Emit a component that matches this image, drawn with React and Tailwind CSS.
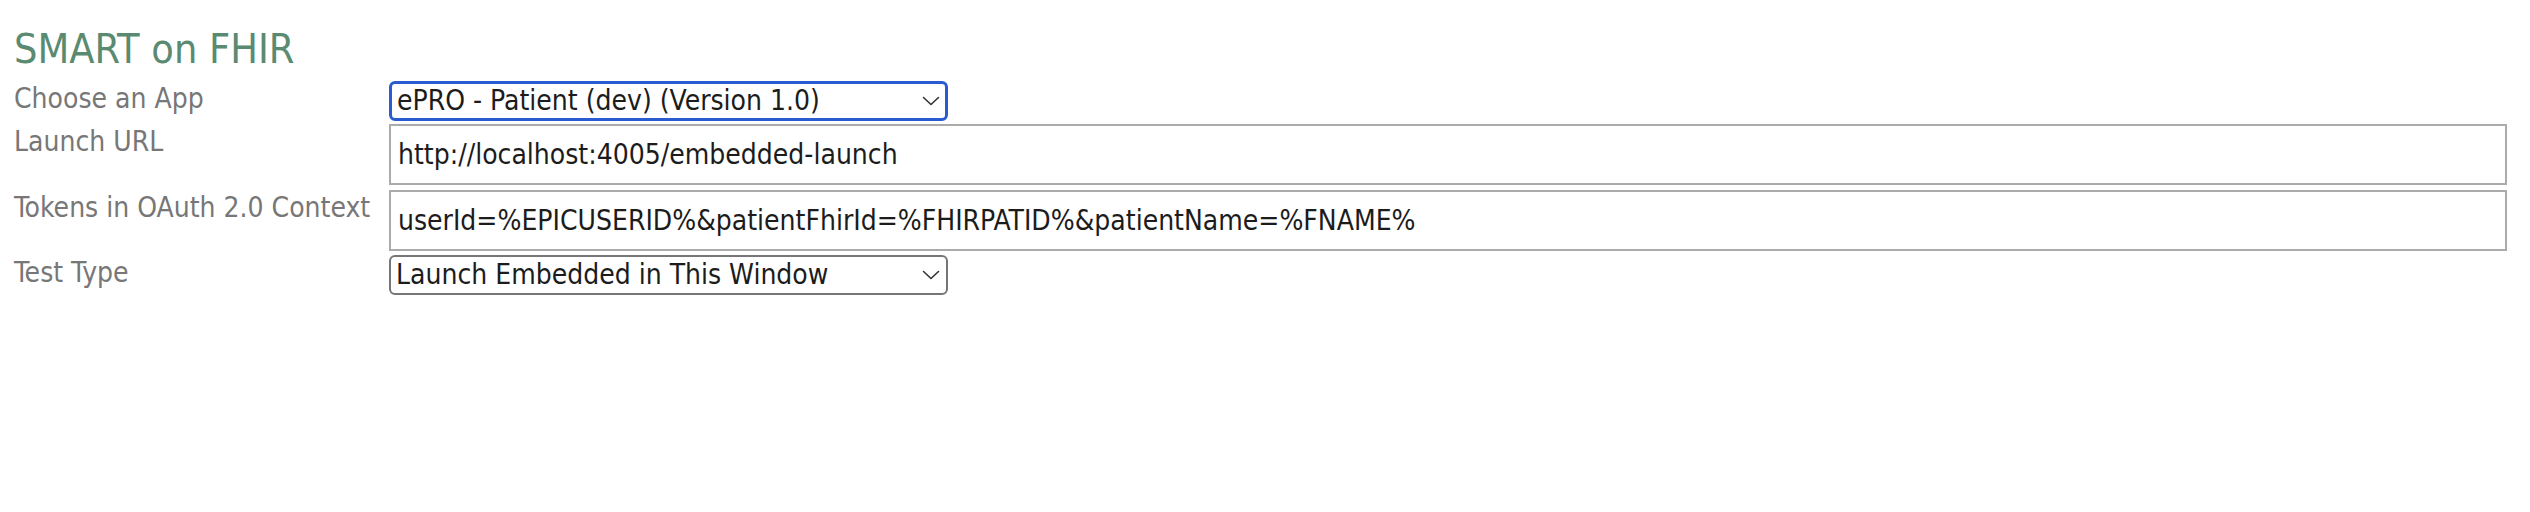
import { useState } from 'react'

const font = { fontFamily: '"DejaVu Sans Condensed", "DejaVu Sans", sans-serif' }

function Chevron() {
  return (
    <svg width="18" height="10" viewBox="0 0 18 10" fill="none" className="pointer-events-none absolute right-[8px] top-1/2 -translate-y-1/2">
      <path d="M1.5 1.5 L9 8.5 L16.5 1.5" stroke="#333" strokeWidth="1.6" strokeLinecap="round" strokeLinejoin="round" />
    </svg>
  )
}

function Select({ value, options, focused, onChange }) {
  return (
    <div className="relative w-[559px]">
      <select
        value={value}
        onChange={(e) => onChange(e.target.value)}
        className={`h-[40px] w-full appearance-none rounded-[6px] bg-white pl-[5px] pr-10 text-[28px] leading-[34px] text-[#1c1c1c] outline-none ${
          focused ? 'border-[3px] border-[#2b5bd0]' : 'border-2 border-[#767676]'
        }`}
      >
        {options.map((o) => (
          <option key={o}>{o}</option>
        ))}
      </select>
      <Chevron />
    </div>
  )
}

function Row({ label, children, className = '' }) {
  return (
    <div className={`flex items-start ${className}`}>
      <div className="w-[375px] shrink-0 text-[28px] leading-[36px] text-[#777]">{label}</div>
      <div className="flex-1">{children}</div>
    </div>
  )
}

export default function App() {
  const [app, setApp] = useState('ePRO - Patient (dev) (Version 1.0)')
  const [url, setUrl] = useState('http://localhost:4005/embedded-launch')
  const [tokens, setTokens] = useState('userId=%EPICUSERID%&patientFhirId=%FHIRPATID%&patientName=%FNAME%')
  const [testType, setTestType] = useState('Launch Embedded in This Window')

  return (
    <div className="min-h-[512px] bg-white pl-[14px] pr-[23px] pt-[25px]" style={font}>
      <h1 className="text-[41px] leading-[48px] font-normal text-[#5a8b72]">SMART on FHIR</h1>

      <div className="mt-[8px] flex flex-col">
        <Row label="Choose an App">
          <Select
            value={app}
            onChange={setApp}
            focused
            options={['ePRO - Patient (dev) (Version 1.0)', 'ePRO - Provider (dev) (Version 1.0)']}
          />
        </Row>
        <Row label="Launch URL" className="mt-[3px]">
          <input
            value={url}
            onChange={(e) => setUrl(e.target.value)}
            className="h-[61px] w-full border-2 border-[#ababab] bg-white px-[7px] text-[28px] text-[#1c1c1c] outline-none"
          />
        </Row>
        <Row label="Tokens in OAuth 2.0 Context" className="mt-[5px]">
          <input
            value={tokens}
            onChange={(e) => setTokens(e.target.value)}
            className="h-[61px] w-full border-2 border-[#ababab] bg-white px-[7px] text-[28px] text-[#1c1c1c] outline-none"
          />
        </Row>
        <Row label="Test Type" className="mt-[4px]">
          <Select
            value={testType}
            onChange={setTestType}
            options={['Launch Embedded in This Window', 'Launch in New Window', 'Launch Standalone']}
          />
        </Row>
      </div>
    </div>
  )
}
